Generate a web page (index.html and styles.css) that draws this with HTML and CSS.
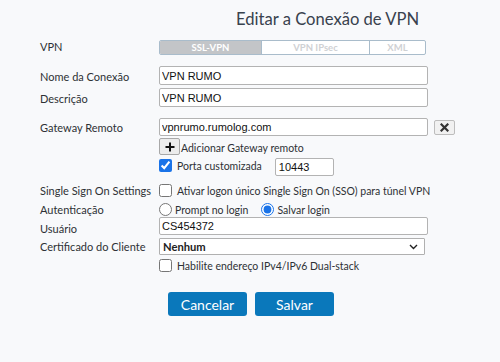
FILE: index.html
```html
<!DOCTYPE html>
<html lang="pt">
<head>
<meta charset="utf-8">
<link rel="stylesheet" href="styles.css">
</head>
<body>
<div class="page">
  <h1 class="title">Editar a Conexão de VPN</h1>

  <div class="row r-vpn">
    <div class="label">VPN</div>
    <div class="seg">
      <span class="seg-item active s1">SSL-VPN</span>
      <span class="seg-item s2">VPN IPsec</span>
      <span class="seg-item s3">XML</span>
    </div>
  </div>

  <div class="row r-nome">
    <div class="label">Nome da Conexão</div>
    <input class="field wide" type="text" value="VPN RUMO">
  </div>

  <div class="row r-desc">
    <div class="label">Descrição</div>
    <input class="field wide" type="text" value="VPN RUMO">
  </div>

  <div class="row r-gw">
    <div class="label">Gateway Remoto</div>
    <input class="field wide" type="text" value="vpnrumo.rumolog.com">
    <button class="xbtn" type="button">
      <svg width="9" height="9" viewBox="0 0 9 9"><path d="M1.5 1.5 L7.5 7.5 M7.5 1.5 L1.5 7.5" stroke="#333" stroke-width="2.2" stroke-linecap="square"/></svg>
    </button>
  </div>

  <div class="row r-add">
    <div class="label"></div>
    <button class="plus" type="button">
      <svg width="10" height="10" viewBox="0 0 10 10"><path d="M5 0.5 V9.5 M0.5 5 H9.5" stroke="#111" stroke-width="2"/></svg>
    </button>
    <span class="text add-text">Adicionar Gateway remoto</span>
  </div>

  <div class="row r-porta">
    <div class="label"></div>
    <input class="chk" type="checkbox" checked>
    <span class="text porta-text">Porta customizada</span>
    <input class="field port" type="text" value="10443">
  </div>

  <div class="row r-sso">
    <div class="label">Single Sign On Settings</div>
    <input class="chk" type="checkbox">
    <span class="text">Ativar logon único Single Sign On (SSO) para túnel VPN</span>
  </div>

  <div class="row r-auth">
    <div class="label">Autenticação</div>
    <input class="rad" type="radio" name="auth">
    <span class="text rad-text">Prompt no login</span>
    <input class="rad" type="radio" name="auth" checked>
    <span class="text">Salvar login</span>
  </div>

  <div class="row r-user">
    <div class="label user-label">Usuário</div>
    <input class="field wide" type="text" value="CS454372">
  </div>

  <div class="row r-cert">
    <div class="label">Certificado do Cliente</div>
    <div class="select">
      <span class="sel-text">Nenhum</span>
      <svg width="9" height="6" viewBox="0 0 9 6"><path d="M1 1 L4.5 4.5 L8 1" fill="none" stroke="#222" stroke-width="1.4"/></svg>
    </div>
  </div>

  <div class="row r-dual">
    <div class="label"></div>
    <input class="chk" type="checkbox">
    <span class="text">Habilite endereço IPv4/IPv6 Dual-stack</span>
  </div>

  <div class="actions">
    <button class="btn" type="button">Cancelar</button>
    <button class="btn" type="button">Salvar</button>
  </div>
</div>
</body>
</html>
```

FILE: styles.css
```css
* { box-sizing: border-box; }
html, body { margin: 0; padding: 0; }
body {
  background: #f8f9fb;
  width: 500px;
  height: 362px;
  overflow: hidden;
  font-family: Lato, "Open Sans", sans-serif;
  color: #333;
}
.page {
  padding: 0 0 0 40px;
}
.title {
  margin: 0;
  padding: 9px 0 0 196px;
  height: 40px;
  font-size: 16.6px;
  font-weight: 400;
  color: #39424e;
  line-height: 20px;
}
.row {
  display: flex;
  align-items: center;
}
.label {
  width: 119px;
  flex: none;
  font-size: 11px;
  color: #2e3135;
  line-height: 14px;
  white-space: nowrap;
}
.text {
  font-size: 10.5px;
  color: #2e3135;
  line-height: 14px;
  white-space: nowrap;
}

/* row positions */
.r-vpn { height: 15px; }
.r-nome { margin-top: 11px; height: 19px; }
.r-desc { margin-top: 3px; height: 19px; }
.r-gw { margin-top: 11px; height: 18px; }
.r-add { margin-top: 2px; height: 17px; }
.r-porta { margin-top: 3px; height: 18px; }
.r-sso { margin-top: 8px; height: 13px; }
.r-auth { margin-top: 6px; height: 13px; }
.r-user { margin-top: 1px; height: 18px; }
.r-cert { margin-top: 3px; height: 17px; }
.r-dual { margin-top: 4px; height: 13px; }

.r-vpn .label { margin-top: -2px; }
.r-nome .label { margin-top: 3px; }
.r-desc .label { margin-top: 3px; }
.r-gw .label { margin-top: 1px; }
.user-label { margin-top: 6px; }

/* segmented control */
.seg {
  display: flex;
  height: 15px;
  width: 267px;
  border: 1px solid #a9bccb;
  border-radius: 2px;
  overflow: hidden;
  background: #fff;
}
.seg-item {
  display: flex;
  align-items: center;
  justify-content: center;
  font-size: 9.5px;
  font-weight: 700;
  color: #cfd1d4;
}
.seg-item.s1 { width: 101px; }
.seg-item.s2 { width: 109px; border-left: 1px solid #a9bccb; border-right: 1px solid #a9bccb; }
.seg-item.s3 { flex: 1; }
.seg-item.active {
  background: #c3c5c8;
  color: #fff;
}

/* inputs */
.field {
  height: 100%;
  border: 1px solid #b3b3b3;
  border-radius: 2px;
  background: #fff;
  font-family: "Liberation Sans", Arial, sans-serif;
  font-size: 11px;
  color: #111;
  padding: 0 0 0 2px;
  margin: 0;
  outline: none;
}
.wide { width: 269px; }
.port {
  width: 59px;
  height: 18px;
  margin-left: 13px;
  padding-left: 3px;
}

.xbtn {
  margin: 0 0 0 6px;
  width: 21px;
  height: 15px;
  border: 1px solid #bdbdbd;
  border-radius: 2px;
  background: #f1f1f1;
  display: flex;
  align-items: center;
  justify-content: center;
  padding: 0;
  align-self: flex-start;
  margin-top: 2px;
}
.plus {
  width: 21px;
  height: 17px;
  border: 1px solid #a8a8a8;
  border-radius: 2px;
  background: #ececec;
  display: flex;
  align-items: center;
  justify-content: center;
  padding: 0;
  margin: 0;
}
.add-text { margin-left: 1px; margin-top: 2px; }

.chk, .rad {
  width: 13px;
  height: 13px;
  margin: 0;
  accent-color: #1a73e8;
  flex: none;
}
.chk + .text { margin-left: 5px; }
.rad + .text { margin-left: 3px; }
.rad-text { margin-right: 13px; }
.porta-text { margin-top: -3px; }
.r-porta .chk { align-self: flex-start; margin-top: 1px; }

/* select */
.select {
  width: 266px;
  height: 17px;
  border: 1px solid #b0b0b0;
  border-radius: 1px;
  background: #fff;
  display: flex;
  align-items: center;
  justify-content: space-between;
  padding: 0 6px 0 3px;
}
.sel-text {
  font-family: Lato, sans-serif;
  font-weight: 700;
  font-size: 11.2px;
  color: #222;
}

/* buttons */
.actions {
  display: flex;
  gap: 8px;
  margin-top: 20px;
  padding-left: 128px;
}
.btn {
  width: 79px;
  height: 24px;
  border: none;
  border-radius: 3px;
  background: #0a78bb;
  color: #fff;
  font-family: Lato, sans-serif;
  font-size: 14px;
  padding: 0;
  margin: 0;
}
```
